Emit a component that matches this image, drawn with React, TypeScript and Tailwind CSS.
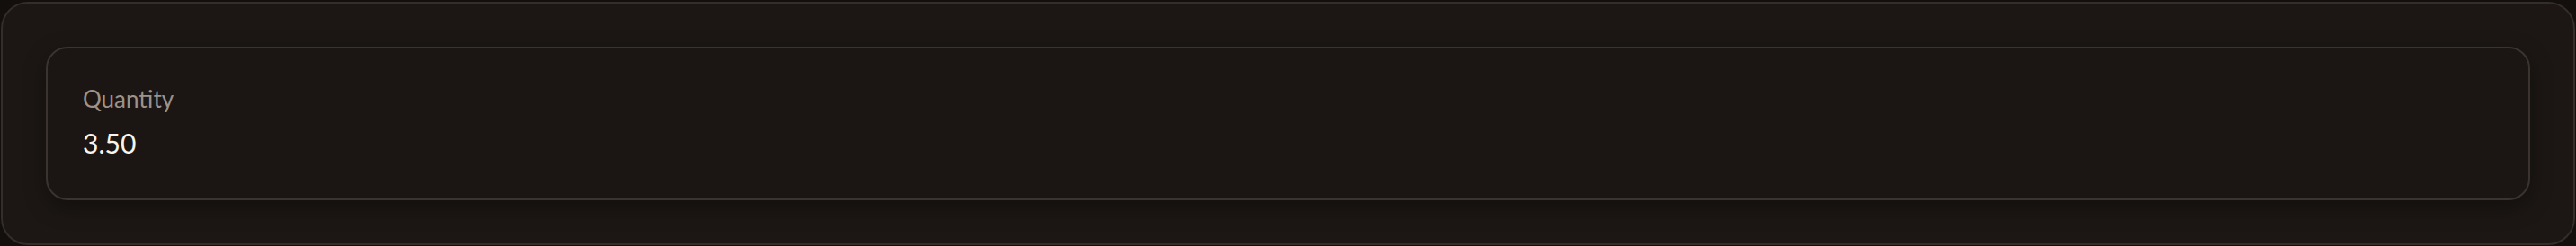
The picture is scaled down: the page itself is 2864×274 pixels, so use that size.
import React from "react";

const App: React.FC = () => {
  return (
    <div className="min-h-screen w-full bg-[#130f0d] p-[1px] pt-[2px]" style={{ fontFamily: "Lato, 'Open Sans', sans-serif" }}>
      <div className="rounded-[30px] border-2 border-[#342d2a] bg-[#1c1714] px-[48px] pt-[48px] pb-[48px] h-[271px]">
        <div className="rounded-[24px] border-2 border-[#3b3330] bg-[#1b1613] px-[39px] pt-[40px] pb-[40px] h-[171px] shadow-[0_8px_24px_rgba(0,0,0,0.35)]">
          <div className="text-[26px] leading-[32px] text-[#9d928c]">Quantity</div>
          <div className="mt-[14px] text-[30px] leading-[38px] text-[#f7f3ef]">3.50</div>
        </div>
      </div>
    </div>
  );
};

export default App;
